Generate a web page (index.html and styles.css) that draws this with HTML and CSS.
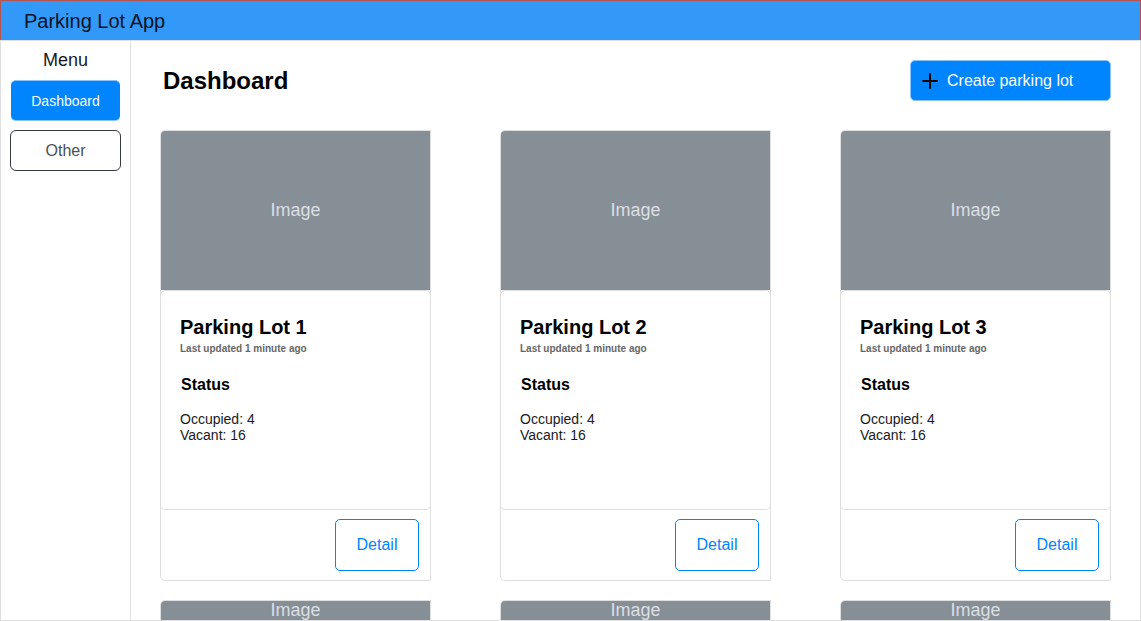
FILE: index.html
```html
<!DOCTYPE html>
<html lang="en">
<head>
<meta charset="utf-8">
<title>Parking Lot App</title>
<link rel="stylesheet" href="styles.css">
</head>
<body>
<div class="app">
  <header class="topbar">Parking Lot App</header>
  <div class="layout">
    <nav class="sidebar" aria-label="Menu">
      <div class="menu-title">Menu</div>
      <button class="menu-item menu-item-active" type="button">Dashboard</button>
      <button class="menu-item" type="button">Other</button>
    </nav>
    <main class="content">
      <div class="content-head">
        <h1 class="page-title">Dashboard</h1>
        <button class="create" type="button">
          <svg class="plus" viewBox="0 0 16 16" aria-hidden="true"><path d="M8 0.3V15.7M0.3 8H15.7" stroke="#000" stroke-width="2" fill="none"/></svg>
          Create parking lot
        </button>
      </div>
      <div class="cards">
        <article class="card">
          <div class="photo">Image</div>
          <div class="card-body">
            <h2 class="lot-name">Parking Lot 1</h2>
            <p class="updated">Last updated 1 minute ago</p>
            <h3 class="status">Status</h3>
            <p class="counts">Occupied: 4<br>Vacant: 16</p>
          </div>
          <div class="card-foot"><button class="detail" type="button">Detail</button></div>
        </article>
        <article class="card">
          <div class="photo">Image</div>
          <div class="card-body">
            <h2 class="lot-name">Parking Lot 2</h2>
            <p class="updated">Last updated 1 minute ago</p>
            <h3 class="status">Status</h3>
            <p class="counts">Occupied: 4<br>Vacant: 16</p>
          </div>
          <div class="card-foot"><button class="detail" type="button">Detail</button></div>
        </article>
        <article class="card">
          <div class="photo">Image</div>
          <div class="card-body">
            <h2 class="lot-name">Parking Lot 3</h2>
            <p class="updated">Last updated 1 minute ago</p>
            <h3 class="status">Status</h3>
            <p class="counts">Occupied: 4<br>Vacant: 16</p>
          </div>
          <div class="card-foot"><button class="detail" type="button">Detail</button></div>
        </article>
        <article class="card card-peek"><div class="photo photo-peek">Image</div></article>
        <article class="card card-peek"><div class="photo photo-peek">Image</div></article>
        <article class="card card-peek"><div class="photo photo-peek">Image</div></article>
      </div>
    </main>
  </div>
</div>
</body>
</html>
```
FILE: styles.css
```css
* {
  box-sizing: border-box;
}

body {
  margin: 0;
  background: #fff;
  color: #000;
  font-family: "Liberation Sans", Arial, sans-serif;
}

h1, h2, h3, p {
  margin: 0;
}

button {
  font-family: inherit;
  cursor: pointer;
}

.app {
  display: flex;
  flex-direction: column;
  height: 100vh;
  overflow: hidden;
}

.topbar {
  flex: none;
  height: 40px;
  padding: 0 23px;
  border: 1px solid #b85450;
  border-bottom: 0;
  background: #3399f8;
  color: #07131f;
  font-size: 20px;
  line-height: 40px;
}

.layout {
  flex: 1;
  display: flex;
  min-height: 0;
  border: 1px solid #dfdfdf;
}

.sidebar {
  flex: none;
  display: flex;
  flex-direction: column;
  gap: 9px;
  width: 130px;
  padding: 9px;
  border-right: 1px solid #dfdfdf;
}

.menu-title {
  color: #1a1a1a;
  font-size: 18px;
  line-height: 21px;
  text-align: center;
}

.menu-item {
  height: 41px;
  padding: 0;
  border: 1px solid #343a40;
  border-radius: 6px;
  background: #fff;
  color: #4b5055;
  font-size: 16px;
}

.menu-item-active {
  margin: 0 1px;
  border: 1px solid #8ac4fb;
  border-width: 1px 0;
  border-radius: 5px;
  background: #0085ff;
  color: #fff;
  font-size: 14px;
}

.content {
  flex: 1;
  min-width: 0;
  overflow: hidden;
  padding: 19px 29px 0;
}

.content-head {
  display: flex;
  align-items: center;
  justify-content: space-between;
  margin-bottom: 29px;
}

.page-title {
  padding-left: 3px;
  font-size: 24px;
  line-height: 28px;
}

.create {
  display: flex;
  align-items: center;
  gap: 9px;
  width: 201px;
  height: 41px;
  padding: 0 11px;
  border: 1px solid #8ac4fb;
  border-radius: 5px;
  background: #0085ff;
  color: #fff;
  font-size: 16px;
}

.plus {
  width: 16px;
  height: 16px;
}

.cards {
  display: grid;
  grid-template-columns: repeat(3, 1fr);
  gap: 19px 69px;
}

.card {
  border: 1px solid #dfdfdf;
  border-radius: 5px 0 0 5px;
  overflow: hidden;
}

.card-peek {
  border-bottom: 0;
  border-radius: 5px 0 0 0;
}

.photo {
  display: flex;
  align-items: center;
  justify-content: center;
  height: 159px;
  background: #868e96;
  color: #dcdfe4;
  font-size: 18px;
}

.photo-peek {
  height: 19px;
}

.card-body {
  height: 220px;
  margin: 0 -1px;
  padding: 24px 19px;
  border: 1px solid #dfdfdf;
  border-radius: 5px;
}

.lot-name {
  font-size: 20px;
  line-height: 24px;
}

.updated {
  margin-top: 4px;
  color: #666;
  font-size: 10px;
  font-weight: bold;
  line-height: 12px;
}

.status {
  margin-top: 20px;
  padding-left: 1px;
  font-size: 16px;
  line-height: 20px;
}

.counts {
  margin-top: 16px;
  color: #1a1a1a;
  font-size: 14px;
  line-height: 16px;
}

.card-foot {
  display: flex;
  justify-content: flex-end;
  padding: 9px 11px;
}

.detail {
  width: 84px;
  height: 52px;
  padding: 0;
  border: 1px solid #0085ff;
  border-radius: 5px;
  background: #fff;
  color: #0085ff;
  font-size: 16px;
}
```
